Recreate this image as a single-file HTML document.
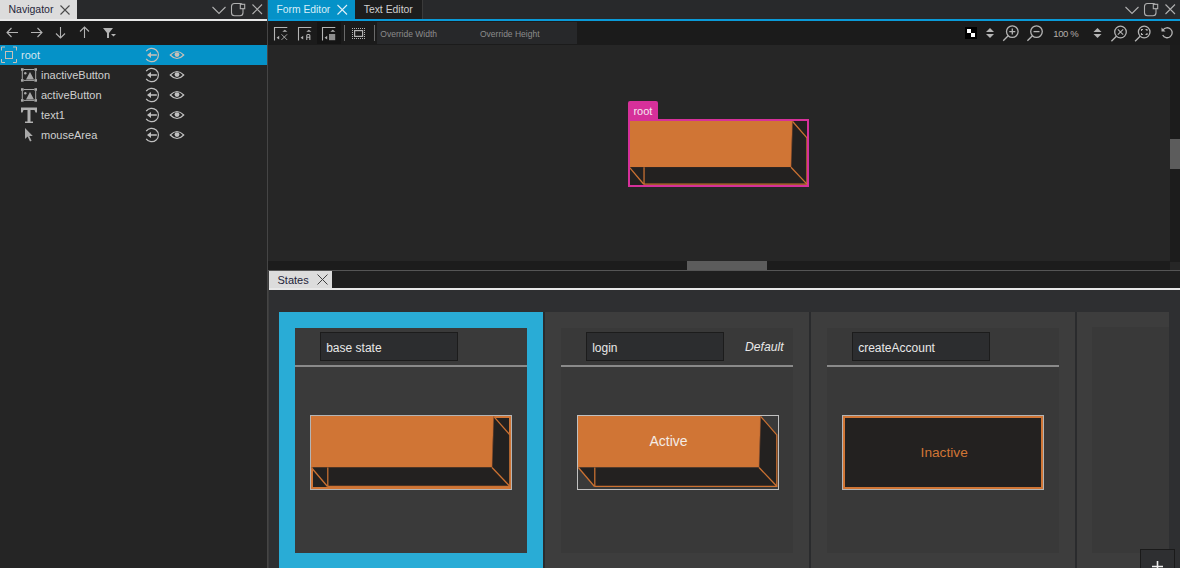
<!DOCTYPE html>
<html><head><meta charset="utf-8">
<style>
*{margin:0;padding:0;box-sizing:border-box}
html,body{width:1180px;height:568px;overflow:hidden;background:#252525;font-family:"Liberation Sans",sans-serif}
.a{position:absolute}
svg{position:absolute;overflow:visible}
.t{position:absolute;white-space:nowrap;line-height:1}
</style></head><body>
<!-- ===== NAVIGATOR ===== -->
<div class="a" style="left:0;top:0;width:267px;height:19px;background:#28292b"></div>
<div class="a" style="left:0;top:0;width:77px;height:19px;background:#dcdcdc"></div>
<div class="t" style="left:8.5px;top:4.1px;font-size:10.5px;color:#26263a">Navigator</div>
<svg style="left:0;top:0" width="267" height="19"><g stroke="#4a4a4a" stroke-width="1.1" fill="none"><path d="M60.5 5.5l9 9M69.5 5.5l-9 9"/></g>
<g stroke="#b0b0b0" stroke-width="1.1" fill="none"><path d="M212.5 7l6.5 6.5 6.5-6.5"/><rect x="231.5" y="3.5" width="11.5" height="12.3" rx="3"/><path d="M252.5 4.5l9.5 9.5M262 4.5l-9.5 9.5"/></g>
<rect x="240.3" y="4.3" width="4.4" height="4.4" fill="#28292b" stroke="#b0b0b0" stroke-width="1.1"/></svg>
<div class="a" style="left:0;top:19px;width:267px;height:2px;background:#e8e8e8"></div>
<div class="a" style="left:0;top:21px;width:267px;height:24px;background:#1b1b1b"></div>
<svg style="left:0;top:21px" width="267" height="24"><g stroke="#b4b4b4" stroke-width="1.1" fill="none">
<path d="M7 11.5h11M11.5 7l-4.5 4.5 4.5 4.5"/>
<path d="M31 11.5h11M37.5 7l4.5 4.5-4.5 4.5"/>
<path d="M60.5 6v11M56 12.5l4.5 4.5 4.5-4.5"/>
<path d="M84.5 6v11M80 10.5l4.5-4.5 4.5 4.5"/></g>
<path d="M103 7h10l-4 5v5h-2v-5z" fill="#b4b4b4"/><path d="M111 13h5l-2.5 2.5z" fill="#b4b4b4"/></svg>
<!-- rows -->
<div class="a" style="left:0;top:45px;width:267px;height:20px;background:#0592c8"></div>
<svg style="left:0;top:45px" width="267" height="20"><g stroke="#c8c0b8" stroke-width="1" fill="none">
<path d="M1.5 5.5v-3.5h3.5M13 2h3.5v3.5M16.5 14v3.5h-3.5M5 17.5h-3.5v-3.5"/><rect x="5.5" y="6.5" width="7" height="7"/></g></svg>
<div class="t" style="left:21px;top:50.19px;font-size:11px;color:#d4e6ee;">root</div>
<div class="t" style="left:41px;top:70.19px;font-size:11px;color:#d0d0d0;">inactiveButton</div>
<div class="t" style="left:41px;top:90.19px;font-size:11px;color:#d0d0d0;">activeButton</div>
<div class="t" style="left:41px;top:110.19px;font-size:11px;color:#d0d0d0;">text1</div>
<div class="t" style="left:41px;top:130.19px;font-size:11px;color:#d0d0d0;">mouseArea</div>
<svg style="left:0;top:65px" width="40" height="20"><g fill="#a8a8a8"><rect x="21" y="3.2" width="2.6" height="2.6"/><rect x="34.4" y="3.2" width="2.6" height="2.6"/><rect x="21" y="14.1" width="2.6" height="2.6"/><rect x="34.4" y="14.1" width="2.6" height="2.6"/>
<circle cx="25.3" cy="8.2" r="1.2"/><path d="M26 14.5h8l-4-7.5z"/></g><g stroke="#a8a8a8" stroke-width="1" fill="none"><path d="M23.6 4.5h10.8M23.6 15.4h10.8M22.3 5.8v8.3M35.7 5.8v8.3"/></g></svg>
<svg style="left:0;top:85px" width="40" height="20"><g fill="#a8a8a8"><rect x="21" y="3.2" width="2.6" height="2.6"/><rect x="34.4" y="3.2" width="2.6" height="2.6"/><rect x="21" y="14.1" width="2.6" height="2.6"/><rect x="34.4" y="14.1" width="2.6" height="2.6"/>
<circle cx="25.3" cy="8.2" r="1.2"/><path d="M26 14.5h8l-4-7.5z"/></g><g stroke="#a8a8a8" stroke-width="1" fill="none"><path d="M23.6 4.5h10.8M23.6 15.4h10.8M22.3 5.8v8.3M35.7 5.8v8.3"/></g></svg>
<svg style="left:0;top:105px" width="40" height="20"><path fill="#b0b0b0" d="M21 2.5h16v5h-1.5l-1-2.5h-4v11.5h2.5v1.5h-8v-1.5h2.5v-11.5h-4l-1 2.5h-1.5z"/></svg>
<svg style="left:0;top:125px" width="40" height="20"><path fill="#a8a8a8" d="M25 3v11l2.6-2.4 2.4 5 1.6-.8-2.3-4.8h3.5z"/></svg>
<svg style="left:140px;top:45px" width="50" height="20"><g stroke="#c8c0b8" stroke-width="1.2" fill="none"><path d="M6.2 6.2A6.7 6.7 0 1 1 6.2 13.8"/></g><path fill="#c8c0b8" d="M7 10l4-3v2.2h5.8v1.6h-5.8v2.2z"/>
<g stroke="#c8c0b8" stroke-width="1.2" fill="none"><path d="M30.3 10Q37 3 43.7 10Q37 17 30.3 10z"/></g><circle cx="37" cy="9.6" r="2.4" fill="#c8c0b8"/></svg>
<svg style="left:140px;top:65px" width="50" height="20"><g stroke="#c0c0c0" stroke-width="1.2" fill="none"><path d="M6.2 6.2A6.7 6.7 0 1 1 6.2 13.8"/></g><path fill="#c0c0c0" d="M7 10l4-3v2.2h5.8v1.6h-5.8v2.2z"/>
<g stroke="#c0c0c0" stroke-width="1.2" fill="none"><path d="M30.3 10Q37 3 43.7 10Q37 17 30.3 10z"/></g><circle cx="37" cy="9.6" r="2.4" fill="#c0c0c0"/></svg>
<svg style="left:140px;top:85px" width="50" height="20"><g stroke="#c0c0c0" stroke-width="1.2" fill="none"><path d="M6.2 6.2A6.7 6.7 0 1 1 6.2 13.8"/></g><path fill="#c0c0c0" d="M7 10l4-3v2.2h5.8v1.6h-5.8v2.2z"/>
<g stroke="#c0c0c0" stroke-width="1.2" fill="none"><path d="M30.3 10Q37 3 43.7 10Q37 17 30.3 10z"/></g><circle cx="37" cy="9.6" r="2.4" fill="#c0c0c0"/></svg>
<svg style="left:140px;top:105px" width="50" height="20"><g stroke="#c0c0c0" stroke-width="1.2" fill="none"><path d="M6.2 6.2A6.7 6.7 0 1 1 6.2 13.8"/></g><path fill="#c0c0c0" d="M7 10l4-3v2.2h5.8v1.6h-5.8v2.2z"/>
<g stroke="#c0c0c0" stroke-width="1.2" fill="none"><path d="M30.3 10Q37 3 43.7 10Q37 17 30.3 10z"/></g><circle cx="37" cy="9.6" r="2.4" fill="#c0c0c0"/></svg>
<svg style="left:140px;top:125px" width="50" height="20"><g stroke="#c0c0c0" stroke-width="1.2" fill="none"><path d="M6.2 6.2A6.7 6.7 0 1 1 6.2 13.8"/></g><path fill="#c0c0c0" d="M7 10l4-3v2.2h5.8v1.6h-5.8v2.2z"/>
<g stroke="#c0c0c0" stroke-width="1.2" fill="none"><path d="M30.3 10Q37 3 43.7 10Q37 17 30.3 10z"/></g><circle cx="37" cy="9.6" r="2.4" fill="#c0c0c0"/></svg>

<!-- separator -->
<div class="a" style="left:267px;top:0;width:1px;height:568px;background:#454545"></div>

<!-- ===== EDITOR ===== -->
<div class="a" style="left:268px;top:0;width:912px;height:19px;background:#28292b"></div>
<div class="a" style="left:268px;top:0;width:87px;height:19px;background:#0592c8"></div>
<div class="a" style="left:355px;top:0;width:67px;height:19px;background:#1d1d1d"></div>
<div class="a" style="left:422px;top:0;width:1px;height:19px;background:#3a3a3a"></div>
<div class="a" style="left:268px;top:19px;width:912px;height:2px;background:#0a9ad8"></div>
<div class="a" style="left:268px;top:21px;width:912px;height:24px;background:#1b1b1b"></div>
<div class="a" style="left:268px;top:45px;width:902px;height:216px;background:#262626"></div>
<div class="a" style="left:1170px;top:45px;width:10px;height:216px;background:#1c1c1c"></div>
<div class="a" style="left:1170px;top:139px;width:10px;height:30px;background:#5c5c5c"></div>
<div class="a" style="left:268px;top:261px;width:912px;height:9px;background:#1c1c1c"></div>
<div class="a" style="left:687px;top:261px;width:80px;height:9px;background:#5c5c5c"></div>
<div class="a" style="left:1170px;top:262px;width:10px;height:8px;background:#262626"></div>
<div class="a" style="left:268px;top:270px;width:912px;height:1px;background:#555"></div>
<div class="a" style="left:268px;top:271px;width:912px;height:17px;background:#1f1f1f"></div>
<div class="a" style="left:269px;top:271px;width:63px;height:17px;background:#dcdcdc"></div>
<div class="a" style="left:268px;top:288px;width:912px;height:2px;background:#e8e8e8"></div>
<div class="a" style="left:268px;top:290px;width:912px;height:278px;background:#2e2f31"></div>
<div class="a" style="left:268px;top:271px;width:1px;height:297px;background:#3c3c3c"></div>

<svg width="0" height="0" style="position:absolute"><defs>
<g id="inact"><rect x="0" y="0" width="200" height="73" fill="#d07535"/><rect x="2" y="2" width="196" height="69" fill="#232120"/></g>
<g id="act">
<path d="M0 0H182.6L181 51.5H0z" fill="#d07535"/>
<path d="M0 51.5H181L182.6 0L199 18.5V70.5H16.5z" fill="#232120"/>
<g stroke="#cc7232" stroke-width="1.25" fill="none">
<path d="M182.6 0.3L198.8 18.8" vector-effect="non-scaling-stroke"/><path d="M198.8 18.5V70.8" vector-effect="non-scaling-stroke"/><path d="M16.5 70.3H199.3" vector-effect="non-scaling-stroke"/>
<path d="M181 51.5L198.8 70.3" vector-effect="non-scaling-stroke"/><path d="M0.3 51.5L16.5 70.5" vector-effect="non-scaling-stroke"/><path d="M16.8 51.5V70.5" vector-effect="non-scaling-stroke"/><path d="M181 51.5L182.6 0" vector-effect="non-scaling-stroke" stroke-width="0.6" stroke="#b06030"/>
</g></g></defs></svg>
<div class="t" style="left:276.5px;top:5.2px;font-size:10.3px;color:#d8eef8;">Form Editor</div>
<div class="t" style="left:363.7px;top:5.2px;font-size:10.4px;color:#d0d0d0;">Text Editor</div>
<svg style="left:268px;top:0" width="912" height="19"><g stroke="#e0f0f8" stroke-width="1.1" fill="none"><path d="M69.5 5l9.5 9.5M79 5l-9.5 9.5"/></g>
<g stroke="#b0b0b0" stroke-width="1.1" fill="none"><path d="M857.5 7l6.5 6.5 6.5-6.5"/><rect x="876.5" y="3.5" width="11.5" height="12.3" rx="3"/><path d="M897.5 4.5l9.5 9.5M907 4.5l-9.5 9.5"/></g>
<rect x="885.3" y="4.3" width="4.4" height="4.4" fill="#28292b" stroke="#b0b0b0" stroke-width="1.1"/></svg>
<div class="a" style="left:317px;top:22px;width:24px;height:22px;background:#141414"></div>
<div class="a" style="left:344px;top:25px;width:1px;height:16px;background:#6a6a6a"></div>
<div class="a" style="left:374px;top:25px;width:1px;height:16px;background:#6a6a6a"></div>
<div class="a" style="left:377px;top:22px;width:200px;height:22px;background:#27282a"></div>
<div class="t" style="left:380.3px;top:29.6px;font-size:8.5px;color:#8c8c8c;">Override Width</div>
<div class="t" style="left:480px;top:29.6px;font-size:8.5px;color:#8c8c8c;">Override Height</div>
<svg style="left:268px;top:21px" width="912" height="24">
<g stroke="#b4b4b4" stroke-width="1.1" fill="none">
<path d="M6.5 19.5v-13h12.8"/><path d="M13.5 13.3l5.6 5.6M19.1 13.3l-5.6 5.6" stroke-width="0.9"/>
<path d="M30.5 19.5v-13h12.8"/>
<path d="M54.5 19.5v-13h12.8"/>
</g>
<g fill="#b4b4b4"><path d="M14.3 10.7h5l-2.5-2z"/><path d="M11.2 14.8v3.8l-2.6-1.9z"/>
<path d="M38.3 10.7h5l-2.5-2z"/><path d="M35.2 14.8v3.8l-2.6-1.9z"/><path d="M38.2 19.1v-4.6q0-1.5 1.5-1.5h1.2q1.5 0 1.5 1.5v4.6h-1.1v-2.3h-2v2.3zm1.1-3.4h2v-1.1q0-.6-.6-.6h-.8q-.6 0-.6.6z"/>
<path d="M62.3 10.7h5l-2.5-2z"/><path d="M59.2 14.8v3.8l-2.6-1.9z"/></g>
<rect x="61" y="13" width="6.2" height="6.2" fill="#8e8e8e"/>
<g stroke="#b4b4b4" stroke-width="1" fill="none" stroke-dasharray="1 1"><path d="M84 7.5h13M84 17.5h13M84.5 9v8M96.5 9v8"/></g>
<g stroke="#b4b4b4" stroke-width="1.2" fill="none"><rect x="86.6" y="9.6" width="8" height="5.8"/></g>
</svg>
<svg style="left:0;top:21px" width="1180" height="24">
<rect x="965" y="6" width="12" height="12" fill="#000"/><rect x="967" y="8" width="4" height="4" fill="#fff"/><rect x="971" y="12" width="4" height="4" fill="#fff"/>
<g fill="#b4b4b4"><path d="M986 11h8l-4-4z"/><path d="M986 13h8l-4 4z"/><path d="M1093.5 11h8l-4-4z"/><path d="M1093.5 13h8l-4 4z"/></g>
<g stroke="#b4b4b4" stroke-width="1.3" fill="none">
<circle cx="1012.3" cy="10.6" r="5.8"/><path d="M1008.2 14.8l-5 5"/><path d="M1009.3 10.6h6M1012.3 7.6v6"/>
<circle cx="1036.5" cy="10.6" r="5.8"/><path d="M1032.4 14.8l-5 5"/><path d="M1033.5 10.6h6"/>
<circle cx="1120.5" cy="11" r="5.8"/><path d="M1116.4 15.2l-5 5"/>
<circle cx="1144.2" cy="11" r="5.8"/><path d="M1140.1 15.2l-5 5"/>
<path d="M1163 9a5 5 0 1 1 -0.3 5"/>
</g>
<g stroke="#b4b4b4" stroke-width="1.1" fill="none"><path d="M1117.8 8.3l5.4 5.4M1123.2 8.3l-5.4 5.4"/>
<path d="M1141.5 10v-1.5h1.5M1145.5 8.5h1.5v1.5M1147 12v1.5h-1.5M1143 13.5h-1.5v-1.5"/></g>
<path d="M1161.5 6.5v4h4z" fill="#b4b4b4"/>
</svg>
<div class="t" style="left:1053.3px;top:28.86px;font-size:9.5px;color:#b4aea8;letter-spacing:-0.4px">100 %</div>
<div class="a" style="left:628px;top:101px;width:30px;height:19px;background:#d6309a;border-radius:2px 2px 0 0"></div>
<div class="t" style="left:633.4px;top:106.3px;font-size:11px;color:#f4e8f0;">root</div>
<svg id="cv" style="left:629px;top:120.5px" width="179" height="65.5" viewBox="0 0 200 73" preserveAspectRatio="none"><rect width="200" height="73" fill="#232120"/><use href="#act"/></svg>
<div class="a" style="left:628px;top:119px;width:181px;height:68px;border:2px solid #d6309a"></div>
<div class="t" style="left:277.5px;top:274.59px;font-size:11px;color:#1e1e3a;">States</div>
<svg style="left:268px;top:271px" width="70" height="17"><g stroke="#404040" stroke-width="1" fill="none"><path d="M49.5 3.5l10 10M59.5 3.5l-10 10"/></g></svg>
<div class="a" style="left:279px;top:312px;width:264px;height:256px;background:#29acd6"></div>
<div class="a" style="left:295px;top:328px;width:232px;height:225px;background:#3a3a3a"></div>
<div class="a" style="left:543px;top:312px;width:2px;height:256px;background:#2a2b2d"></div>
<div class="a" style="left:545px;top:312px;width:264px;height:256px;background:#3d3d3d"></div>
<div class="a" style="left:561px;top:328px;width:232px;height:225px;background:#393939"></div>
<div class="a" style="left:809px;top:312px;width:2px;height:256px;background:#2a2b2d"></div>
<div class="a" style="left:811px;top:312px;width:264px;height:256px;background:#3d3d3d"></div>
<div class="a" style="left:827px;top:328px;width:232px;height:225px;background:#393939"></div>
<div class="a" style="left:1075px;top:312px;width:2px;height:256px;background:#2a2b2d"></div>
<div class="a" style="left:1077px;top:312px;width:92px;height:256px;background:#3d3d3d"></div>
<div class="a" style="left:1092px;top:327px;width:77px;height:226px;background:#393939"></div>
<div class="a" style="left:295px;top:365px;width:232px;height:2px;background:#8a8a8a"></div>
<div class="a" style="left:320px;top:332px;width:138px;height:29px;background:#2c2d2f;border:1px solid #1c1c1c"></div>
<div class="t" style="left:326.2px;top:341.74px;font-size:12px;color:#e8e8e8;">base state</div>
<div class="a" style="left:561px;top:365px;width:232px;height:2px;background:#8a8a8a"></div>
<div class="a" style="left:586px;top:332px;width:138px;height:29px;background:#2c2d2f;border:1px solid #1c1c1c"></div>
<div class="t" style="left:592.2px;top:341.74px;font-size:12px;color:#e8e8e8;">login</div>
<div class="a" style="left:827px;top:365px;width:232px;height:2px;background:#8a8a8a"></div>
<div class="a" style="left:852px;top:332px;width:138px;height:29px;background:#2c2d2f;border:1px solid #1c1c1c"></div>
<div class="t" style="left:858.2px;top:341.74px;font-size:12px;color:#e8e8e8;">createAccount</div>
<div class="t" style="left:745px;top:341.07px;font-size:12.2px;color:#e8e8e8;font-style:italic">Default</div>
<div class="a" style="left:310px;top:415px;width:202px;height:75px;border:1px solid #b4b4b4"></div>
<svg style="left:311px;top:416px" width="200" height="73" viewBox="0 0 200 73" preserveAspectRatio="none"><use href="#inact"/><use href="#act"/></svg>
<div class="a" style="left:577px;top:415px;width:202px;height:75px;border:1px solid #c0c0c0"></div>
<svg style="left:578px;top:416px" width="200" height="73" viewBox="0 0 200 73" preserveAspectRatio="none"><use href="#act"/></svg>
<div class="t" style="left:649.5px;top:433.85px;font-size:14px;color:#f4ece6;">Active</div>
<div class="a" style="left:842px;top:415px;width:202px;height:75px;border:1px solid #b4b4b4"></div>
<svg style="left:843px;top:416px" width="200" height="73"><use href="#inact"/></svg>
<div class="t" style="left:920.6px;top:446.0px;font-size:13.7px;color:#d07535;">Inactive</div>
<div class="a" style="left:1140px;top:549px;width:35px;height:25px;background:#2e2f31;border:1px solid #1a1a1a"></div>
<svg style="left:1140px;top:549px" width="40" height="19"><path d="M12 17.5h11M17.5 12v11" stroke="#f0f0f0" stroke-width="1.6"/></svg>
</body></html>
